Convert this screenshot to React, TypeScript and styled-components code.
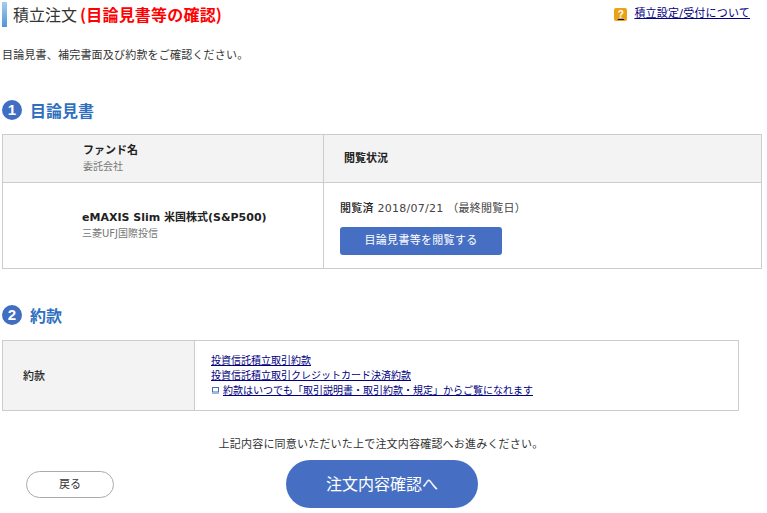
import React from "react";
import styled, { createGlobalStyle } from "styled-components";

const Global = createGlobalStyle`
  html, body { margin: 0; padding: 0; background: #fff; }
  body { font-family: "DejaVu Sans", "Noto Sans CJK JP", sans-serif; font-size: 11px; color: #333; }
`;
const Page = styled.div`
  width: 767px; height: 513px; overflow: hidden; box-sizing: border-box; padding: 2px 5px 0 2px;
`;
const TitleRow = styled.header`
  display: flex; justify-content: space-between; align-items: flex-start; height: 25px;
`;
const Title = styled.h1`
  margin: 0; height: 25px; box-sizing: border-box; padding-left: 6px;
  border-left: 5px solid transparent;
  border-image: linear-gradient(#a9d0f0, #4b93d6) 1;
  font-family: "Noto Sans CJK JP", sans-serif;
  font-size: 16px; line-height: 24px; font-weight: 400; color: #333;
`;
const Red = styled.span`
  color: #f00; font-weight: 700; font-size: 16px; margin-left: 3px; letter-spacing: 0.2px;
`;
const HelpLink = styled.a`
  display: flex; align-items: center; gap: 7px; margin: 4px 12px 0 0; font-size: 11px; line-height: 16px;
  color: #000080; text-decoration: underline; letter-spacing: 0.2px;
`;
const HelpIcon = styled.span`
  width: 13px; height: 13px; border-radius: 2px; background: #e8a317; color: #fff; font-size: 10px;
  font-weight: 700; line-height: 13px; text-align: center; display: inline-block;
  font-family: "Liberation Sans", sans-serif;
`;
const Lead = styled.p`
  margin: 21px 0 0; font-size: 11px; line-height: 16px; color: #333; letter-spacing: 0.2px;
`;
const Section = styled.section<{ $top: number }>`
  margin-top: ${(p) => p.$top}px;
`;
const Heading = styled.h2`
  margin: 0; display: flex; align-items: center; gap: 8px; height: 22px;
  font-family: "Noto Sans CJK JP", sans-serif;
  font-size: 16px; font-weight: 700; line-height: 22px; color: #2f6fc0;
`;
const Badge = styled.span`
  width: 20px; height: 20px; border-radius: 50%; background: #3f6ec2; color: #fff;
  font-family: "Liberation Sans", sans-serif; font-size: 15px; font-weight: 700;
  line-height: 20px; text-align: center;
`;
const FundTable = styled.div`
  margin-top: 13px; width: 760px; box-sizing: border-box; border: 1px solid #ccc;
  display: grid; grid-template-columns: 321px 1fr; grid-template-rows: 48px 85px;
`;
const HeadCell = styled.div<{ $pad: number }>`
  background: #f3f3f3; border-bottom: 1px solid #ccc; padding-left: ${(p) => p.$pad}px;
  display: flex; flex-direction: column; justify-content: center;
  &:first-child { border-right: 1px solid #ccc; }
`;
const FundCell = styled.div`
  border-right: 1px solid #ccc; padding-left: 79px; display: flex; flex-direction: column; justify-content: center;
  padding-top: 1px;
`;
const StrongLabel = styled.div`
  font-size: 11px; line-height: 16px; font-weight: 700; color: #222;
`;
const Sub = styled.div`
  font-size: 10px; line-height: 16px; color: #777;
`;
const StatusCell = styled.div`
  padding: 18px 0 0 16px; box-sizing: border-box;
`;
const StatusLine = styled.div`
  font-size: 11px; line-height: 16px; color: #444; letter-spacing: 0.25px;
`;
const StatusKey = styled.b`
  font-weight: 500; color: #222;
`;
const ViewButton = styled.button`
  display: block; margin-top: 10px; width: 162px; height: 28px; border: 0; border-radius: 3px;
  background: #466fc3; color: #fff; font: inherit; font-size: 11px; letter-spacing: 0.3px; line-height: 28px; padding: 0;
`;
const TermsTable = styled.div`
  margin-top: 14px; width: 737px; height: 71px; box-sizing: border-box; border: 1px solid #ccc;
  display: grid; grid-template-columns: 192px 1fr;
`;
const TermsHead = styled.div`
  background: #f3f3f3; border-right: 1px solid #ccc; padding: 0 0 2px 20px; display: flex; align-items: center;
  font-size: 11px; font-weight: 500; color: #222;
`;
const TermsBody = styled.div`
  padding: 12px 0 0 16px; display: flex; flex-direction: column;
`;
const TermLink = styled.a`
  font-size: 10px; line-height: 15px; color: #000080; text-decoration: underline; display: block;
`;
const TermRow = styled.div`
  display: flex; align-items: center; gap: 4px; padding-left: 1px;
`;
const Note = styled.p`
  margin: 26px 0 0 0; text-align: center; font-size: 11px; line-height: 16px; color: #333;
  width: 758px; letter-spacing: 0.2px;
`;
const Footer = styled.div`
  display: flex; align-items: center; margin-top: 7px; padding-left: 24px;
`;
const BackButton = styled.button`
  width: 88px; height: 27px; box-sizing: border-box; border: 1px solid #aaa; border-radius: 14px; background: #fff;
  font: inherit; font-size: 11px; color: #333; padding: 0 0 2px;
`;
const SubmitButton = styled.button`
  margin-left: 172px; width: 192px; height: 48px; border: 0; border-radius: 24px; background: #466fc3; color: #fff;
  font: inherit; font-size: 16px; padding: 0 0 2px;
`;

export default function App() {
  return (
    <Page>
      <Global />
      <TitleRow>
        <Title>積立注文<Red>(目論見書等の確認)</Red></Title>
        <HelpLink>
          <HelpIcon>?</HelpIcon>
          積立設定/受付について
        </HelpLink>
      </TitleRow>
      <Lead>目論見書、補完書面及び約款をご確認ください。</Lead>
      <Section $top={35}>
        <Heading><Badge>1</Badge>目論見書</Heading>
        <FundTable>
          <HeadCell $pad={80}>
            <StrongLabel>ファンド名</StrongLabel>
            <Sub>委託会社</Sub>
          </HeadCell>
          <HeadCell $pad={20}>
            <StrongLabel>閲覧状況</StrongLabel>
          </HeadCell>
          <FundCell>
            <StrongLabel>eMAXIS Slim 米国株式(S&amp;P500)</StrongLabel>
            <Sub>三菱UFJ国際投信</Sub>
          </FundCell>
          <StatusCell>
            <StatusLine><StatusKey>閲覧済</StatusKey> 2018/07/21 （最終閲覧日）</StatusLine>
            <ViewButton>目論見書等を閲覧する</ViewButton>
          </StatusCell>
        </FundTable>
      </Section>
      <Section $top={35}>
        <Heading><Badge>2</Badge>約款</Heading>
        <TermsTable>
          <TermsHead>約款</TermsHead>
          <TermsBody>
            <TermLink>投資信託積立取引約款</TermLink>
            <TermLink>投資信託積立取引クレジットカード決済約款</TermLink>
            <TermRow>
              <svg width="7" height="7" viewBox="0 0 7 7" fill="none">
                <rect x="0.5" y="0.5" width="6" height="4.5" stroke="#3b6fb5" />
                <path d="M0 6.5h7" stroke="#9db9dc" />
              </svg>
              <TermLink>約款はいつでも「取引説明書・取引約款・規定」からご覧になれます</TermLink>
            </TermRow>
          </TermsBody>
        </TermsTable>
      </Section>
      <Note>上記内容に同意いただいた上で注文内容確認へお進みください。</Note>
      <Footer>
        <BackButton>戻る</BackButton>
        <SubmitButton>注文内容確認へ</SubmitButton>
      </Footer>
    </Page>
  );
}
